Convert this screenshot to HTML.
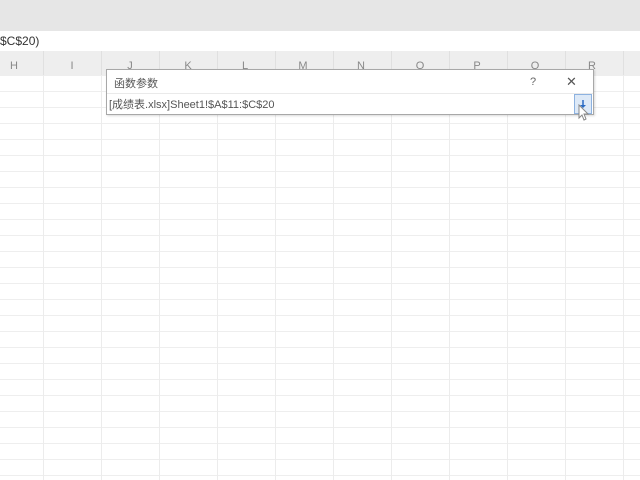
<!DOCTYPE html><html><head><meta charset="utf-8"><style>
body{margin:0;width:640px;height:480px;overflow:hidden;background:#fff;position:relative;font-family:"Liberation Sans","Noto Sans CJK SC",sans-serif}
.top{position:absolute;left:0;top:0;width:640px;height:31px;background:#e6e6e6}
.fx{position:absolute;left:0;top:31px;width:640px;height:20px;background:#fff;font-size:12px;color:#333;line-height:20px}
.hdr{position:absolute;left:0;top:51px;width:640px;height:24px;background:#eeeeee;border-bottom:1px solid #e0e0e0}
.grid{position:absolute;left:0;top:75px;width:640px;height:405px;
background-image:linear-gradient(90deg,#ececec 1px,transparent 1px),linear-gradient(#eeeeee 1px,transparent 1px);
background-size:58px 16px,16px 16px;background-position:43px 0,0 0}
.ch{position:absolute;top:60px;font-size:11px;color:#888;width:20px;text-align:center}
.vl{position:absolute;top:51px;height:24px;width:1px;background:#e0e0e0}
.dlg{position:absolute;left:106px;top:69px;width:486px;height:44px;background:#fff;border:1px solid #a8a8a8;box-shadow:1px 1px 2px rgba(0,0,0,.15)}
.t{position:absolute;left:7px;top:5px;font-size:11px;color:#555}
.sep{position:absolute;left:0;top:23px;width:486px;height:1px;background:#eaeaea}
.in{position:absolute;left:2px;top:26px;font-size:11px;color:#555}
.q{position:absolute;left:423px;top:6px;font-size:11px;color:#666}
.x{position:absolute;left:459px;top:4px;font-size:13px;color:#555}
.btn{position:absolute;left:467px;top:24px;width:16px;height:18px;background:#dde9f7;border:1px solid #8db2e0}
</style></head><body>
<div class="top"></div>
<div class="fx">$C$20)</div>
<div class="hdr"></div>
<div class="grid"></div>
<div class="vl" style="left:43px"></div><div class="vl" style="left:101px"></div><div class="vl" style="left:159px"></div><div class="vl" style="left:217px"></div><div class="vl" style="left:275px"></div><div class="vl" style="left:333px"></div><div class="vl" style="left:391px"></div><div class="vl" style="left:449px"></div><div class="vl" style="left:507px"></div><div class="vl" style="left:565px"></div><div class="vl" style="left:623px"></div>
<div class="ch" style="left:4px">H</div><div class="ch" style="left:62px">I</div><div class="ch" style="left:120px">J</div><div class="ch" style="left:178px">K</div><div class="ch" style="left:235px">L</div><div class="ch" style="left:293px">M</div><div class="ch" style="left:351px">N</div><div class="ch" style="left:410px">O</div><div class="ch" style="left:467px">P</div><div class="ch" style="left:525px">Q</div><div class="ch" style="left:582px">R</div>
<div class="dlg"><div class="t">函数参数</div><div class="q">?</div><div class="x">✕</div><div class="sep"></div>
<div class="in">[成绩表.xlsx]Sheet1!$A$11:$C$20</div>
<div class="btn"><svg width="16" height="18"><path d="M8 5v7" stroke="#2a6bc4" stroke-width="1.5"/><path d="M5 10l3 3 3-3z" fill="#2a6bc4"/></svg></div></div>
<svg style="position:absolute;left:578px;top:104px" width="12" height="18"><path d="M1 1v13l3-3 2 5 2-1-2-5h4z" fill="#fff" stroke="#888"/></svg>
</body></html>
